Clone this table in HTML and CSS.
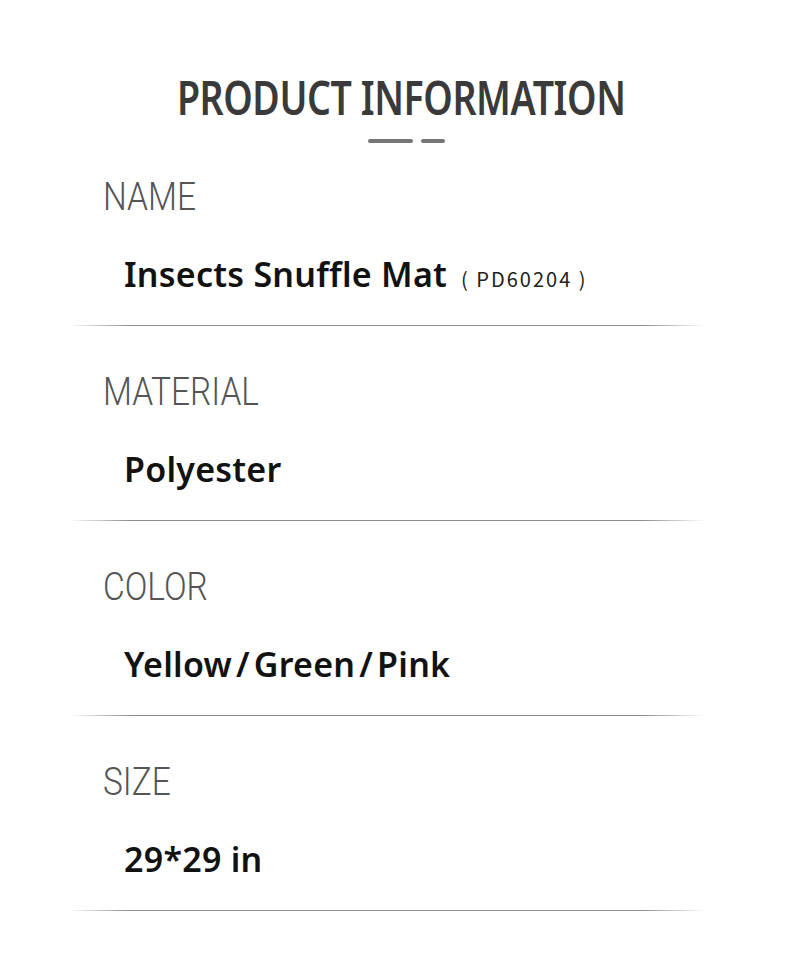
FILE: index.html
```html
<!DOCTYPE html>
<html lang="en">
<head>
<meta charset="utf-8">
<title>Product Information</title>
<link rel="stylesheet" href="styles.css">
</head>
<body>
<main class="page">
  <header class="head">
    <h1 class="title">PRODUCT INFORMATION</h1>
    <div class="dashes"><span class="dash long"></span><span class="dash short"></span></div>
  </header>
  <section class="item">
    <div class="label">NAME</div>
    <div class="value">Insects Snuffle Mat<span class="code">( PD60204 )</span></div>
  </section>
  <div class="rule"></div>
  <section class="item">
    <div class="label">MATERIAL</div>
    <div class="value">Polyester</div>
  </section>
  <div class="rule"></div>
  <section class="item">
    <div class="label">COLOR</div>
    <div class="value">Yellow<span class="sl">/</span>Green<span class="sl">/</span>Pink</div>
  </section>
  <div class="rule"></div>
  <section class="item">
    <div class="label">SIZE</div>
    <div class="value">29*29 in</div>
  </section>
  <div class="rule"></div>
</main>
</body>
</html>
```
FILE: styles.css
```css
* { box-sizing: border-box; }
html, body { margin: 0; padding: 0; background: #fff; }
body { font-family: "Noto Sans", "Open Sans", sans-serif; }
.page { width: 790px; height: 975px; padding-top: 74px; overflow: hidden; }
.head { display: flex; flex-direction: column; align-items: center; padding-left: 12px; }
.title {
  margin: 0;
  font-family: "Noto Sans", sans-serif;
  font-weight: 600;
  font-size: 46px;
  line-height: 46px;
  letter-spacing: -0.5px;
  color: #3a3a3a;
  white-space: nowrap;
  transform: scaleX(0.815);
}
.dashes { display: flex; gap: 8px; margin-top: 19px; padding-left: 11px; }
.dash { display: block; height: 4px; border-radius: 2px; background: #767676; }
.dash.long { width: 45px; }
.dash.short { width: 24px; }
.item { padding-left: 103px; padding-top: 47px; }
.head + .item { padding-top: 35px; }
.label {
  font-family: "Roboto", sans-serif;
  font-weight: 300;
  font-size: 38px;
  line-height: 38px;
  color: #555;
  white-space: nowrap;
  transform: scaleX(0.88);
  transform-origin: left center;
}
.value {
  margin-top: 41px;
  padding-left: 21px;
  padding-bottom: 34px;
  font-family: "Noto Sans", sans-serif;
  font-weight: 600;
  font-size: 34px;
  line-height: 34px;
  letter-spacing: 0.25px;
  color: #121212;
}
.sl { margin: 0 4px; }
.code {
  margin-left: 14px;
  font-family: "Noto Sans CJK SC", "Noto Sans", sans-serif;
  font-weight: 400;
  font-size: 20px;
  line-height: 1;
  letter-spacing: 2px;
  color: #222;
}
.rule {
  margin-left: 68px;
  width: 637px;
  height: 1px;
  background: linear-gradient(90deg, rgba(140,140,140,0) 0%, #8c8c8c 10%, #8c8c8c 90%, rgba(140,140,140,0) 100%);
}
```
